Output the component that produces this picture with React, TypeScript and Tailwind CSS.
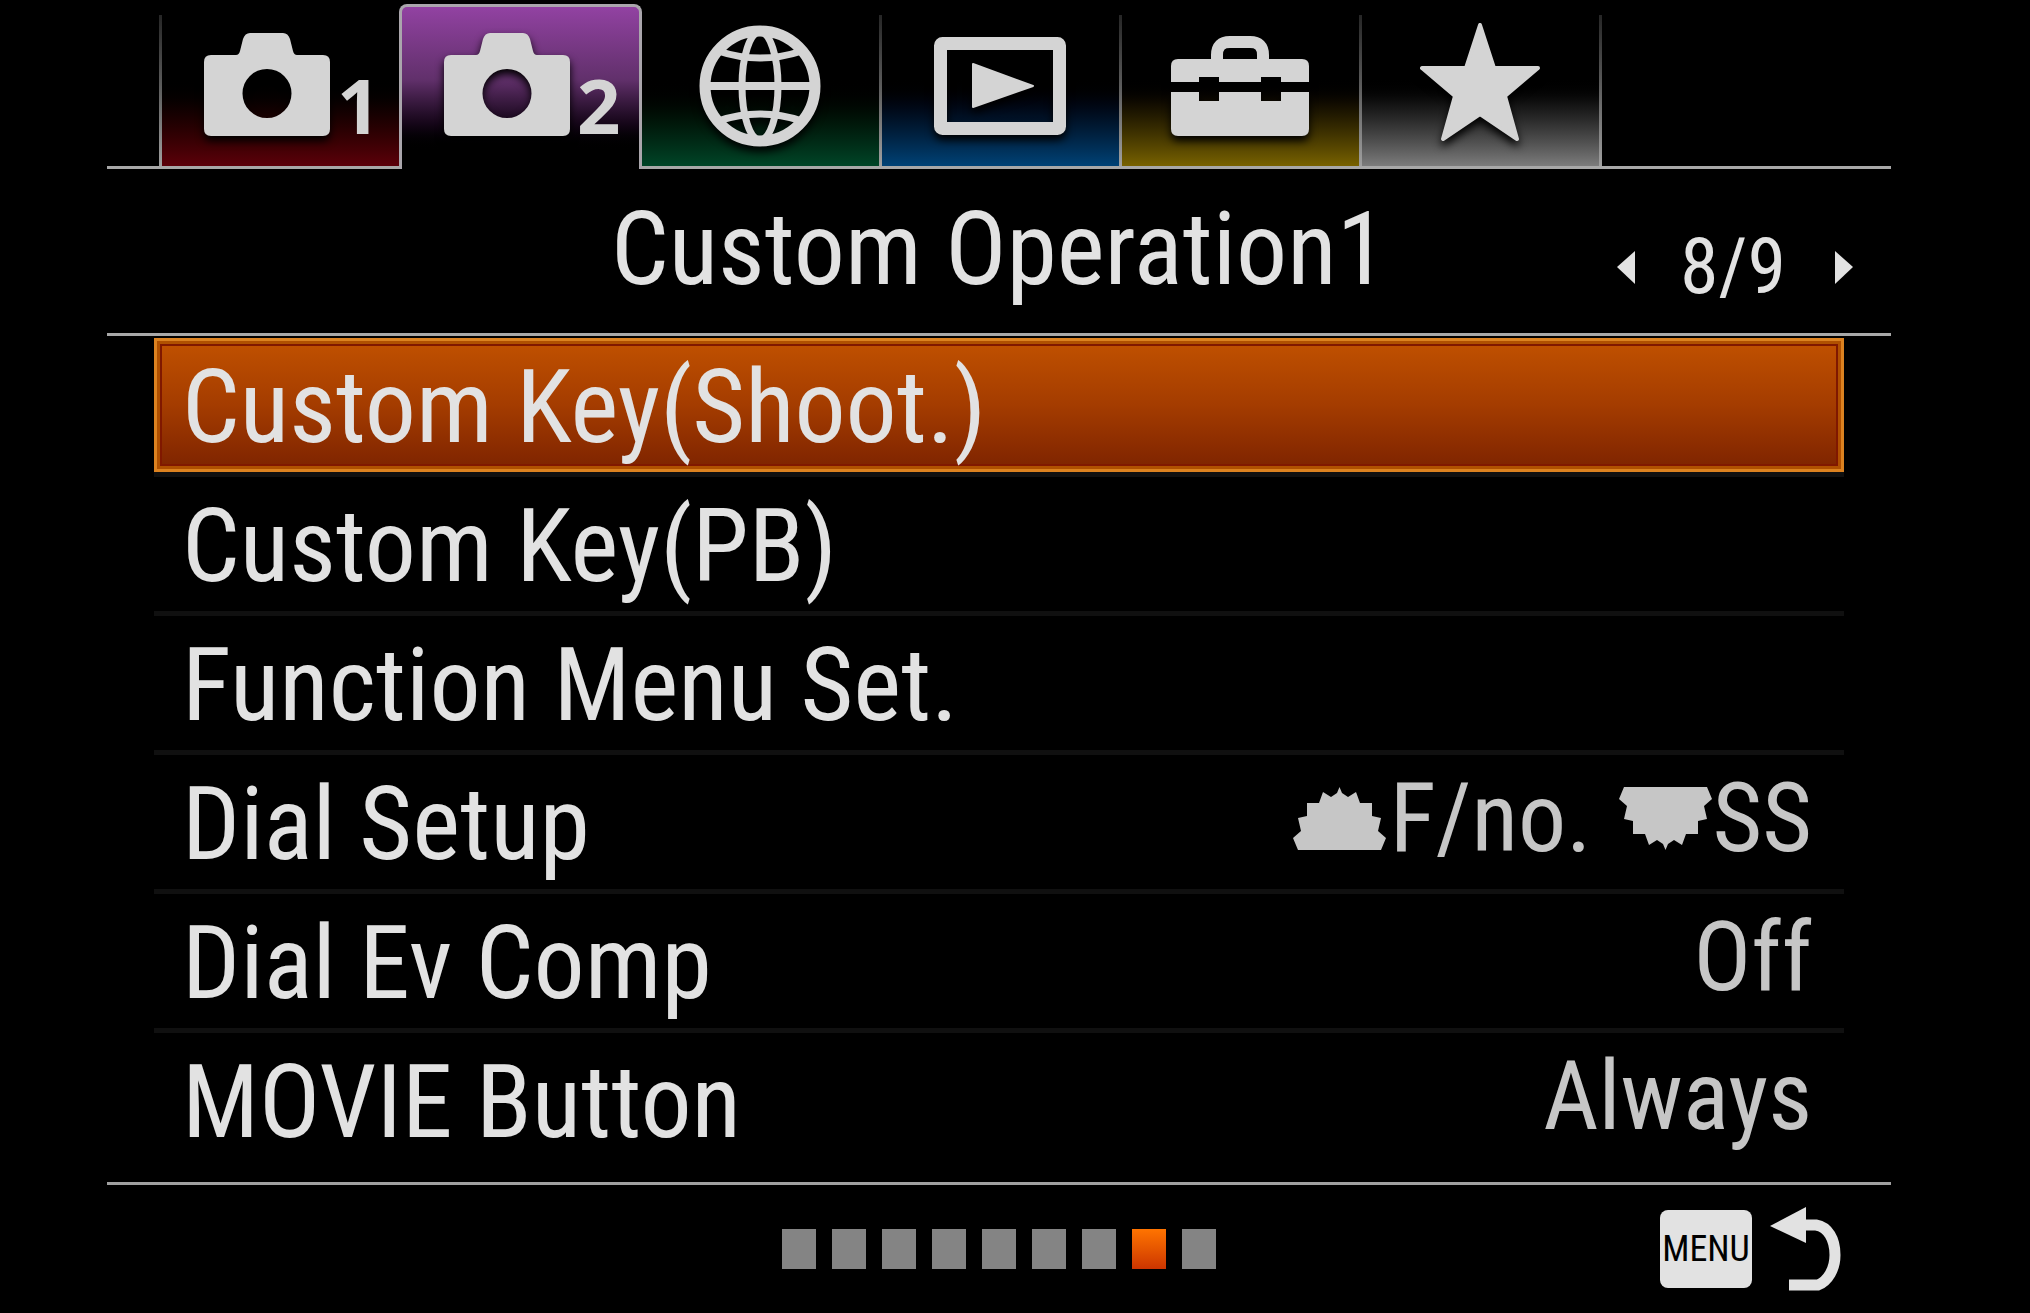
import React, { useState } from "react";
import clsx from "clsx";

function CameraIcon() {
  return (
    <svg className="w-[126px] h-[103px] shrink-0 drop-shadow-[0_5px_4px_#000000]" viewBox="0 0 126 103" fill="#d4d4d4">
      <path
        fillRule="evenodd"
        d="M7 22H32Q35 22 36 18L39 6Q41 0 46 0H79Q84 0 86 6L89 18Q90 22 93 22H119Q126 22 126 29V96Q126 103 119 103H7Q0 103 0 96V29Q0 22 7 22ZM63 36A24.500 24.500 0 1 0 63 85A24.500 24.500 0 1 0 63 36Z"
      />
    </svg>
  );
}

function GlobeIcon() {
  return (
    <g fill="none" stroke="#d4d4d4" strokeWidth="7">
      <circle cx="118" cy="71" r="55" strokeWidth="11" />
      <ellipse cx="118" cy="71" rx="18" ry="54" />
      <path d="M63 71H173" strokeWidth="8" />
      <path d="M76 36Q118 50 160 36M76 106Q118 92 160 106" />
    </g>
  );
}

function PlaybackIcon() {
  return (
    <g fill="#d4d4d4">
      <rect x="58.500" y="28.500" width="119" height="85" rx="2" fill="none" stroke="#d4d4d4" strokeWidth="13" />
      <path d="M91 49L151 71L91 92Z" stroke="#d4d4d4" strokeWidth="2" strokeLinejoin="round" />
    </g>
  );
}

function ToolboxIcon() {
  return (
    <g fill="#d4d4d4">
      <path d="M95 46V40Q95 27 108 27H128Q141 27 141 40V46" fill="none" stroke="#d4d4d4" strokeWidth="12" />
      <path d="M56 44H180Q187 44 187 51V67H159V62H139V67H97V62H77V67H49V51Q49 44 56 44Z" />
      <path d="M49 77H77V86H97V77H139V86H159V77H187V114Q187 121 180 121H56Q49 121 49 114Z" />
    </g>
  );
}

function StarIcon() {
  return (
    <path
      fill="#d4d4d4"
      stroke="#d4d4d4"
      strokeWidth="4"
      strokeLinejoin="round"
      d="M118 10L132 53H176L143 81L155 124L118 99L81 124L93 81L60 53H104Z"
    />
  );
}

function DialIcon({ flipped = false }: { flipped?: boolean }) {
  return (
    <svg
      className={clsx("w-[93px] h-[63px] shrink-0", flipped && "-scale-y-100")}
      viewBox="0 0 93 63"
      fill="#c6c6c6"
    >
      <path d="M46.500 0L49 6L55 10L63 5L67 16H79V29L88 31L85 44L93 51L88 63H5L0 51L8 44L5 31L14 29V16H26L30 5L38 10L44 6Z" />
    </svg>
  );
}

function ReturnIcon() {
  return (
    <svg className="w-[71px] h-[85px]" viewBox="0 0 71 85" fill="#e2e2e2">
      <path d="M0 19L36 0V36Z" />
      <path d="M34 18H46C58 20 65 32 65 48C65 62 58 74 48 78H19" fill="none" stroke="#e2e2e2" strokeWidth="11" />
    </svg>
  );
}

const tabs = [
  { name: "Camera settings 1", number: "1", glow: "to-[#5c000a]" },
  { name: "Camera settings 2", number: "2", glow: "" },
  { name: "Network", icon: <GlobeIcon />, glow: "to-[#004527]" },
  { name: "Playback", icon: <PlaybackIcon />, glow: "to-[#004276]" },
  { name: "Setup", icon: <ToolboxIcon />, glow: "to-[#786200]" },
  { name: "My Menu", icon: <StarIcon />, glow: "to-[#7c7c7c]" },
];

const items = [
  { label: "Custom Key(Shoot.)" },
  { label: "Custom Key(PB)" },
  { label: "Function Menu Set." },
  {
    label: "Dial Setup",
    value: (
      <>
        <DialIcon />
        <span className="ml-1 mr-7">F/no.</span>
        <DialIcon flipped />
        <span>SS</span>
      </>
    ),
  },
  { label: "Dial Ev Comp", value: "Off" },
  { label: "MOVIE Button", value: "Always" },
];

const pages = [1, 2, 3, 4, 5, 6, 7, 8, 9];

function Divider() {
  return <span className="w-[3px] shrink-0 bg-linear-to-b from-[#262626] to-[#a0a0a0]" />;
}

function App() {
  const [activeTab, setActiveTab] = useState(1);
  const [selected, setSelected] = useState(0);
  const [page, setPage] = useState(8);

  return (
    <div className="min-h-screen bg-black pl-[107px] pr-[139px] text-[#e2e2e2] font-['Roboto_Condensed','Roboto','Liberation_Sans',sans-serif]">
      <nav className="flex items-end pt-1">
        <div className="w-[52px] border-b-3 border-[#a8a8a8]" />
        {tabs.map((tab, i) => {
          const content = tab.number ? (
            <span className="flex items-end self-end pl-[42px] pb-[30px]">
              <CameraIcon />
              <span className="ml-[7px] h-[57px] text-[76px] leading-[52px] font-bold text-[#d4d4d4] font-['Open_Sans',sans-serif]">
                {tab.number}
              </span>
            </span>
          ) : (
            <svg className="w-[237px] h-[151px] drop-shadow-[0_5px_4px_#000000]" viewBox="0 0 237 151">
              {tab.icon}
            </svg>
          );

          return i === activeTab ? (
            <button
              key={tab.name}
              type="button"
              aria-label={tab.name}
              aria-current="page"
              className="relative z-10 -mr-[3px] flex w-[243px] h-[165px] shrink-0 rounded-t-lg border-3 border-b-0 border-[#aaa6ac] bg-linear-to-b from-[#9242a2] via-[#61306b] via-45% to-black to-90% pb-[3px]"
            >
              {content}
            </button>
          ) : (
            <button
              key={tab.name}
              type="button"
              aria-label={tab.name}
              onClick={() => setActiveTab(i)}
              className="flex w-60 h-[154px] shrink-0 border-b-3 border-[#a8a8a8]"
            >
              <Divider />
              <span className={clsx("flex flex-1 h-full bg-linear-to-b from-black from-40%", tab.glow)}>{content}</span>
            </button>
          );
        })}
        <div className="flex flex-1 h-[154px] border-b-3 border-[#a8a8a8]">
          <Divider />
        </div>
      </nav>

      <header className="grid grid-cols-[1fr_auto_1fr] h-[167px] items-center border-b-3 border-[#a8a8a8]">
        <h1 className="col-start-2 pb-1 text-[102px] leading-none whitespace-nowrap">Custom Operation1</h1>
        <div className="flex items-center justify-end pt-8 pr-[38px]">
          <button type="button" aria-label="Previous page" onClick={() => setPage(Math.max(1, page - 1))}>
            <svg className="w-[18px] h-[33px]" viewBox="0 0 18 33" fill="#e2e2e2">
              <path d="M0 16L18 0V33Z" />
            </svg>
          </button>
          <span className="w-[200px] pr-1 text-center text-[78px] leading-none">{page}/9</span>
          <button type="button" aria-label="Next page" onClick={() => setPage(Math.min(9, page + 1))}>
            <svg className="w-[18px] h-[33px]" viewBox="0 0 18 33" fill="#e2e2e2">
              <path d="M0 0L18 16L0 33Z" />
            </svg>
          </button>
        </div>
      </header>

      <ul className="px-[47px] pt-0.5 pb-2.5 border-b-3 border-[#a0a0a0]">
        {items.map((item, i) => (
          <li key={item.label} className="border-b-5 border-[#101010] last:border-transparent">
            <button
              type="button"
              onClick={() => setSelected(i)}
              className={clsx(
                "flex w-full h-[134px] items-center justify-between px-7 text-left whitespace-nowrap",
                i === selected &&
                  "bg-linear-to-b from-[#c25200] via-[#a43c00] to-[#7c2200] shadow-[inset_0_0_0_3px_#dc8220,inset_0_0_0_6px_#b05000,inset_0_0_0_8px_#801800]"
              )}
            >
              <span className="pt-1 text-[102px] leading-none">{item.label}</span>
              {item.value && (
                <span className="flex items-center pb-2 pr-1 text-8xl leading-none text-[#c6c6c6]">{item.value}</span>
              )}
            </button>
          </li>
        ))}
      </ul>

      <footer className="grid grid-cols-[1fr_auto_1fr] h-32 items-center">
        <div className="col-start-2 flex gap-4">
          {pages.map((p) => (
            <button
              key={p}
              type="button"
              aria-label={`Page ${p}`}
              onClick={() => setPage(p)}
              className={clsx("w-[34px] h-10", p === page ? "bg-linear-to-b from-[#ff7400] to-[#cc3400]" : "bg-[#848484]")}
            />
          ))}
        </div>
        <div className="flex items-center justify-end gap-[18px] pr-[50px]">
          <button
            type="button"
            className="w-[92px] h-[78px] rounded-lg bg-[#e2e2e2] text-center text-4xl leading-none text-black"
          >
            MENU
          </button>
          <button type="button" aria-label="Back">
            <ReturnIcon />
          </button>
        </div>
      </footer>
    </div>
  );
}

export default App;
